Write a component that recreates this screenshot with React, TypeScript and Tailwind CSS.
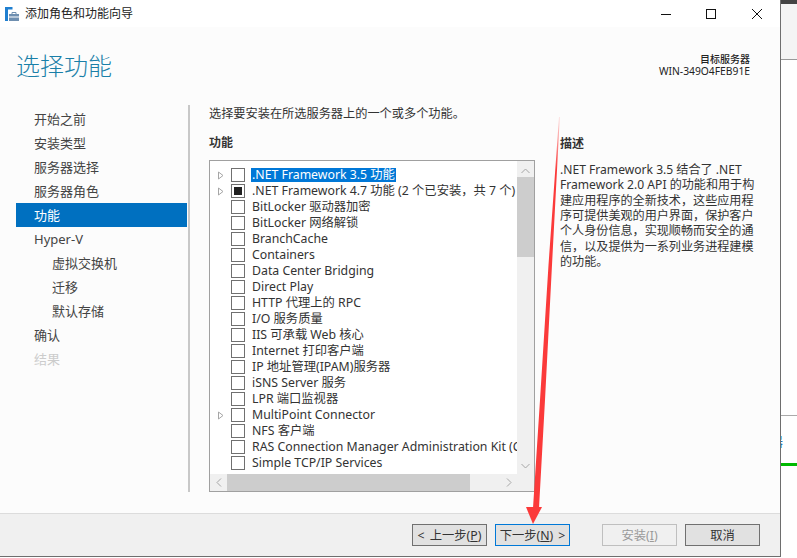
const items: [string, boolean][] = [
  [".NET Framework 3.5 功能", true],
  [".NET Framework 4.7 功能 (2 个已安装，共 7 个)", true],
  ["BitLocker 驱动器加密", false],
  ["BitLocker 网络解锁", false],
  ["BranchCache", false],
  ["Containers", false],
  ["Data Center Bridging", false],
  ["Direct Play", false],
  ["HTTP 代理上的 RPC", false],
  ["I/O 服务质量", false],
  ["IIS 可承载 Web 核心", false],
  ["Internet 打印客户端", false],
  ["IP 地址管理(IPAM)服务器", false],
  ["iSNS Server 服务", false],
  ["LPR 端口监视器", false],
  ["MultiPoint Connector", true],
  ["NFS 客户端", false],
  ["RAS Connection Manager Administration Kit (CMAK)", false],
  ["Simple TCP/IP Services", false],
];

const nav: [string, string][] = [
  ["开始之前", "pl-[18px] text-[#444]"],
  ["安装类型", "pl-[18px] text-[#444]"],
  ["服务器选择", "pl-[18px] text-[#444]"],
  ["服务器角色", "pl-[18px] text-[#444]"],
  ["功能", "pl-[18px] bg-[#0070c0] text-white"],
  ["Hyper-V", "pl-[18px] text-[#444]"],
  ["虚拟交换机", "pl-[36px] text-[#444]"],
  ["迁移", "pl-[36px] text-[#444]"],
  ["默认存储", "pl-[36px] text-[#444]"],
  ["确认", "pl-[18px] text-[#444]"],
  ["结果", "pl-[18px] text-[#ccc]"],
];

const desc = [
  ".NET Framework 3.5 结合了 .NET",
  "Framework 2.0 API 的功能和用于构",
  "建应用程序的全新技术，这些应用程",
  "序可提供美观的用户界面，保护客户",
  "个人身份信息，实现顺畅而安全的通",
  "信，以及提供为一系列业务进程建模",
  "的功能。",
];

function Btn({ children, cls }: { children: React.ReactNode; cls: string }) {
  return <div className={`h-[22px] w-[75px] pt-[2px] flex items-center justify-center text-[12.3px] ${cls}`}>{children}</div>;
}

export default function App() {
  return (
    <div className="relative w-[797px] h-[558px] overflow-hidden bg-white flex text-[12px] text-[#333]" style={{ fontFamily: '"Noto Sans", "Noto Sans CJK SC", sans-serif' }}>
      <div className="w-[781px] h-[557px] border-r border-b border-[#6e6e6e] flex flex-col shrink-0">
        <div className="h-[27px] bg-white flex items-center relative shrink-0">
          <svg width="14" height="14" viewBox="0 0 14 14" className="ml-[5px]">
            <rect x="0" y="0" width="7.5" height="2.5" fill="#1f7fd0" />
            <rect x="0" y="0" width="3" height="14" fill="#1f7fd0" />
            <rect x="4" y="7" width="10" height="7" fill="#6f8fb0" />
            <path d="M7 7V5.5h4V7" fill="none" stroke="#6f8fb0" />
            <rect x="4" y="9.5" width="10" height="1" fill="#fff" />
          </svg>
          <span className="ml-[6px] text-[12px] text-[#222]">添加角色和功能向导</span>
          <div className="ml-auto flex items-center">
            <svg width="12" height="12" viewBox="0 0 12 12" className="mr-[33px]"><path d="M1 6.5h10" stroke="#111" strokeWidth="1" /></svg>
            <svg width="12" height="12" viewBox="0 0 12 12" className="mr-[34px]"><rect x="1.5" y="1.5" width="9" height="9" fill="none" stroke="#111" /></svg>
            <svg width="12" height="12" viewBox="0 0 12 12" className="mr-[17px]"><path d="M1 1l10 10M11 1L1 11" stroke="#111" strokeWidth="1" /></svg>
          </div>
        </div>

        <div className="flex-1 bg-[#fcfcfc] flex flex-col min-h-0">
          <div className="h-[78px] flex justify-between shrink-0">
            <div className="pl-[16px] pt-[21px] text-[24px] leading-[36px] font-light text-[#1a7fa8]">选择功能</div>
            <div className="pr-[30px] pt-[26px] text-right text-[10.3px] leading-[12px] text-[#222]">
              <div className="text-[10px] font-medium">目标服务器</div>
              <div>WIN-349O4FEB91E</div>
            </div>
          </div>
          <div className="flex flex-1 min-h-0">
            <div className="w-[188px] shrink-0 pl-[16px] pt-[2px] flex">
              <div className="w-[171px]">
                {nav.map(([t, c]) => (
                  <div key={t} className={`h-[24px] leading-[24px] text-[13px] ${c}`}>{t}</div>
                ))}
              </div>
            </div>
            <div className="w-[2px] h-[387px] bg-[#c8c8c8] shrink-0" />
            <div className="w-[349px] pl-[19px] shrink-0">
              <div className="h-[16px] leading-[16px] mt-[1px] text-[12.2px] text-[#333]">选择要安装在所选服务器上的一个或多个功能。</div>
              <div className="mt-[13px] h-[16px] leading-[16px] font-bold text-[12px]">功能</div>
              <div className="mt-[9px] w-[326px] h-[332px] border border-[#a0a0a0] bg-white flex flex-col">
                <div className="flex flex-1 min-h-0">
                  <div className="w-[307px] overflow-hidden pt-[6px] shrink-0">
                    {items.map(([t, exp], i) => (
                      <div key={t} className="h-[16px] flex items-center whitespace-nowrap">
                        <div className="w-[21px] flex justify-center shrink-0">
                          {exp && <svg width="7" height="9" viewBox="0 0 7 9"><path d="M1.5 1v7L6 4.5z" fill="#fff" stroke="#a6a6a6" /></svg>}
                        </div>
                        <div className="w-[14px] h-[14px] border border-[#707070] bg-white flex items-center justify-center shrink-0">
                          {i === 1 && <div className="w-[8px] h-[8px] bg-[#222]" />}
                        </div>
                        <span className={`ml-[6px] text-[12.3px] leading-[14px] px-[1px] ${i === 0 ? "bg-[#0078d7] text-white" : "text-[#333]"}`}>{t}</span>
                      </div>
                    ))}
                  </div>
                  <div className="w-[17px] bg-[#f0f0f0] flex flex-col items-center shrink-0">
                    <svg width="17" height="16" viewBox="0 0 17 16" className="shrink-0"><path d="M4.5 12l4-4 4 4" fill="none" stroke="#a6a6a6" /></svg>
                    <div className="w-[17px] h-[80px] bg-[#cdcdcd] shrink-0" />
                    <div className="flex-1" />
                    <svg width="17" height="18" viewBox="0 0 17 18" className="shrink-0"><path d="M4.5 8l4 4 4-4" fill="none" stroke="#a6a6a6" /></svg>
                  </div>
                </div>
                <div className="h-[17px] bg-[#f0f0f0] flex items-center shrink-0">
                  <svg width="17" height="17" viewBox="0 0 17 17" className="shrink-0"><path d="M11 4.5L7 8.5l4 4" fill="none" stroke="#a6a6a6" /></svg>
                  <div className="w-[243px] h-[17px] bg-[#cdcdcd] shrink-0" />
                  <div className="flex-1" />
                  <svg width="17" height="17" viewBox="0 0 17 17" className="shrink-0 mr-[17px]"><path d="M7 4.5l4 4-4 4" fill="none" stroke="#a6a6a6" /></svg>
                </div>
              </div>
            </div>
            <div className="flex-1 pl-[21px] min-w-0">
              <div className="h-[16px] mt-[31px] leading-[16px] font-bold text-[12px]">描述</div>
              <div className="mt-[10px] text-[12.1px] leading-[15.33px] text-[#333] whitespace-nowrap">
                {desc.map((l) => (
                  <div key={l}>{l}</div>
                ))}
              </div>
            </div>
          </div>
        </div>

        <div className="h-[43px] bg-[#f0f0f0] border-t border-[#dcdcdc] flex items-start pt-[10px] pl-[412px] shrink-0">
          <Btn cls="border border-[#707070] bg-[#e1e1e1]"><span className="mr-[5px]">&lt;</span>上一步(<u>P</u>)</Btn>
          <Btn cls="ml-[8px] border border-[#0078d7] bg-[#e1e1e1]">下一步(<u>N</u>)<span className="ml-[5px]">&gt;</span></Btn>
          <Btn cls="ml-[32px] border border-[#bfbfbf] bg-[#f0f0f0] text-[#9a9a9a]">安装(<u>I</u>)</Btn>
          <Btn cls="ml-[8px] border border-[#707070] bg-[#e1e1e1]">取消</Btn>
        </div>
      </div>
      <div className="flex-1 min-w-0 overflow-hidden">
        <div className="h-[4px] bg-[#444]" />
        <div className="h-[56px] bg-[#f4f4f4] border-b border-[#999]" />
        <div className="h-[356px] bg-white border-b border-[#aaa]" />
        <div className="h-[18px]" />
        <div className="h-[14px] overflow-hidden text-[13px] leading-[14px] text-[#1f6fb5] whitespace-nowrap ml-[-11px]">器</div>
        <div className="h-[15px]" />
        <div className="h-[3px] bg-[#00b900]" />
      </div>
      <svg className="absolute left-0 top-0 pointer-events-none" width="797" height="558" viewBox="0 0 797 558">
        <defs>
          <linearGradient id="fade" x1="0" y1="117" x2="0" y2="170" gradientUnits="userSpaceOnUse">
            <stop offset="0" stopColor="#fb3a3a" stopOpacity="0.15" />
            <stop offset="1" stopColor="#fb3a3a" stopOpacity="1" />
          </linearGradient>
        </defs>
        <polygon points="559,117 559.8,117 552,265 545,400 539,508 533,508 540,400 548.5,265" fill="url(#fade)" />
        <path d="M526 507 L542 507 L533 524 Z" fill="#fb3a3a" />
      </svg>
    </div>
  );
}
